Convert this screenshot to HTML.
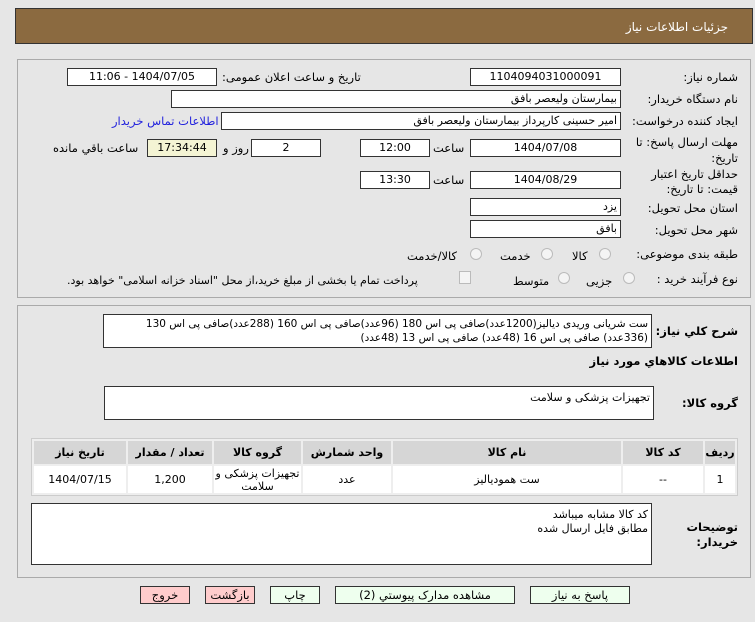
<!DOCTYPE html>
<html><head><meta charset="utf-8"><style>
*{box-sizing:border-box;margin:0;padding:0}
body{width:755px;height:622px;background:#e6e6e6;font-family:"DejaVu Sans","Liberation Sans",sans-serif;font-size:11px;color:#000;position:relative;overflow:hidden;direction:rtl}
.a{position:absolute;white-space:nowrap}
.hdr{left:15px;top:8px;width:738px;height:36px;background:#8b6a40;border:1px solid #333}
.hdr span{position:absolute;right:24px;top:11px;color:#fff;font-size:12px}
.pan{border:1px solid #aaa;background:#e6e6e6}
.box{position:absolute;background:#fff;border:1px solid #333;padding:0 3px;line-height:16px;font-size:11px;overflow:hidden}
.c{text-align:center}
.lbl{position:absolute;white-space:nowrap;font-size:11.5px}
.rad{position:absolute;width:12px;height:12px;border-radius:50%;border:1px solid #bbb;background:#f4f4f4}
table{border-collapse:separate;border-spacing:2px;background:#eee;border:1px solid #ccc;table-layout:fixed}
th{background:#d6d6d6;font-weight:bold;height:23px;font-size:11px}
td{background:#fff;text-align:center;height:27px;font-size:11px;line-height:13px}
.btn{position:absolute;top:586px;height:18px;border:1px solid #333;background:#eeffee;text-align:center;line-height:16px;font-size:11.5px}
.pk{background:#ffcccc}
</style></head><body>
<div class="a hdr"><span>جزئيات اطلاعات نياز</span></div>
<div class="a pan" style="left:17px;top:59px;width:734px;height:239px"></div>
<div class="a pan" style="left:17px;top:305px;width:734px;height:273px"></div>

<div class="lbl" style="right:17px;top:70px">شماره نیاز:</div>
<div class="box c" style="left:470px;top:68px;width:151px;height:18px">1104094031000091</div>
<div class="lbl" style="left:222px;top:70px">تاریخ و ساعت اعلان عمومی:</div>
<div class="box c" style="left:67px;top:68px;width:150px;height:18px">1404/07/05 - 11:06</div>

<div class="lbl" style="right:17px;top:92px">نام دستگاه خریدار:</div>
<div class="box" style="left:171px;top:90px;width:450px;height:18px">بیمارستان ولیعصر بافق</div>

<div class="lbl" style="right:17px;top:114px">ایجاد کننده درخواست:</div>
<div class="box" style="left:221px;top:112px;width:400px;height:18px">امیر حسینی کارپرداز بیمارستان ولیعصر بافق</div>
<div class="lbl" style="left:112px;top:114px;color:#2222dd">اطلاعات تماس خریدار</div>

<div class="lbl" style="right:17px;top:135px">مهلت ارسال پاسخ: تا</div>
<div class="lbl" style="right:17px;top:151px">تاریخ:</div>
<div class="box c" style="left:470px;top:139px;width:151px;height:18px">1404/07/08</div>
<div class="lbl" style="left:433px;top:141px">ساعت</div>
<div class="box c" style="left:360px;top:139px;width:70px;height:18px">12:00</div>
<div class="box c" style="left:251px;top:139px;width:70px;height:18px">2</div>
<div class="lbl" style="left:223px;top:141px">روز و</div>
<div class="box c" style="left:147px;top:139px;width:70px;height:18px;background:#f4f4d4">17:34:44</div>
<div class="lbl" style="left:53px;top:141px">ساعت باقي مانده</div>

<div class="lbl" style="right:17px;top:167px">حداقل تاریخ اعتبار</div>
<div class="lbl" style="right:17px;top:182px">قیمت: تا تاریخ:</div>
<div class="box c" style="left:470px;top:171px;width:151px;height:18px">1404/08/29</div>
<div class="lbl" style="left:433px;top:173px">ساعت</div>
<div class="box c" style="left:360px;top:171px;width:70px;height:18px">13:30</div>

<div class="lbl" style="right:17px;top:201px">استان محل تحویل:</div>
<div class="box" style="left:470px;top:198px;width:151px;height:18px">یزد</div>
<div class="lbl" style="right:17px;top:223px">شهر محل تحویل:</div>
<div class="box" style="left:470px;top:220px;width:151px;height:18px">بافق</div>

<div class="lbl" style="right:17px;top:247px">طبقه بندی موضوعی:</div>
<div class="rad" style="left:599px;top:248px"></div><div class="lbl" style="left:572px;top:249px">کالا</div>
<div class="rad" style="left:541px;top:248px"></div><div class="lbl" style="left:500px;top:249px">خدمت</div>
<div class="rad" style="left:470px;top:248px"></div><div class="lbl" style="left:407px;top:249px">کالا/خدمت</div>

<div class="lbl" style="right:17px;top:272px">نوع فرآیند خرید :</div>
<div class="rad" style="left:623px;top:272px"></div><div class="lbl" style="left:586px;top:274px">جزیی</div>
<div class="rad" style="left:558px;top:272px"></div><div class="lbl" style="left:513px;top:274px">متوسط</div>
<div class="a" style="left:459px;top:271px;width:12px;height:13px;border:1px solid #bbb;background:#f4f4f4"></div>
<div class="lbl" style="left:67px;top:274px;font-size:11px">پرداخت تمام یا بخشی از مبلغ خرید،از محل "اسناد خزانه اسلامی" خواهد بود.</div>

<div class="lbl" style="right:17px;top:324px;font-weight:bold">شرح کلي نياز:</div>
<div class="box" style="left:103px;top:314px;width:549px;height:34px;line-height:14px;white-space:normal;padding-top:2px;font-size:10.5px">ست شریانی وریدی دیالیز(1200عدد)صافی پی اس 180 (96عدد)صافی پی اس 160 (288عدد)صافی پی اس 130 (336عدد) صافی پی اس 16 (48عدد) صافی پی اس 13 (48عدد)</div>
<div class="lbl" style="right:17px;top:354px;font-weight:bold">اطلاعات کالاهاي مورد نياز</div>

<div class="lbl" style="right:17px;top:396px;font-weight:bold">گروه کالا:</div>
<div class="box" style="left:104px;top:386px;width:550px;height:34px;padding-top:3px">تجهیزات پزشکی و سلامت</div>

<table class="a" style="left:31px;top:438px;width:707px">
<colgroup><col style="width:30px"><col style="width:80px"><col style="width:228px"><col style="width:88px"><col style="width:87px"><col style="width:84px"><col style="width:92px"></colgroup>
<tr><th>رديف</th><th>کد کالا</th><th>نام کالا</th><th>واحد شمارش</th><th>گروه کالا</th><th>تعداد / مقدار</th><th>تاریخ نیاز</th></tr>
<tr><td>1</td><td>--</td><td>ست همودیالیز</td><td>عدد</td><td style="white-space:normal">تجهیزات پزشکی و سلامت</td><td>1,200</td><td>1404/07/15</td></tr>
</table>

<div class="lbl" style="right:17px;top:520px;font-weight:bold">توضیحات</div>
<div class="lbl" style="right:17px;top:535px;font-weight:bold">خریدار:</div>
<div class="box" style="left:31px;top:503px;width:621px;height:62px;white-space:normal;line-height:14px;padding-top:4px">کد کالا مشابه میباشد<br>مطابق فایل ارسال شده</div>

<div class="btn" style="left:530px;width:100px">پاسخ به نياز</div>
<div class="btn" style="left:335px;width:180px">مشاهده مدارک پيوستي (2)</div>
<div class="btn" style="left:270px;width:50px">چاپ</div>
<div class="btn pk" style="left:205px;width:50px">بازگشت</div>
<div class="btn pk" style="left:140px;width:50px">خروج</div>
</body></html>
